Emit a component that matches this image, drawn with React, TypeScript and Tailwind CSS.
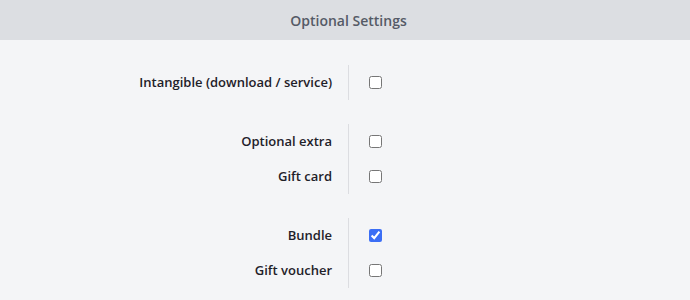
import React, { useState } from 'react';

type Row = { key: string; label: string };

const groups: Row[][] = [
  [{ key: 'intangible', label: 'Intangible (download / service)' }],
  [
    { key: 'optionalExtra', label: 'Optional extra' },
    { key: 'giftCard', label: 'Gift card' },
  ],
  [
    { key: 'bundle', label: 'Bundle' },
    { key: 'giftVoucher', label: 'Gift voucher' },
  ],
];

const App: React.FC = () => {
  const [checked, setChecked] = useState<Record<string, boolean>>({
    bundle: true,
  });

  const toggle = (key: string) =>
    setChecked((prev) => ({ ...prev, [key]: !prev[key] }));

  return (
    <div className="w-[690px] h-[300px] bg-[#f4f5f7] font-['Open_Sans',sans-serif] overflow-hidden">
      <div className="h-10 bg-[#dcdee2] flex items-center justify-center pl-[7px] pt-px text-[14px] font-semibold text-[#555a66]">
        Optional Settings
      </div>
      <div className="flex flex-col gap-6 pt-[25px]">
        {groups.map((rows, i) => (
          <div key={i} className="flex">
            <div className="w-[349px] border-r border-[#dcdde1] pr-4">
              {rows.map((row) => (
                <div
                  key={row.key}
                  className="h-[35px] flex items-center justify-end text-[13px] font-semibold text-[#1f2129]"
                >
                  {row.label}
                </div>
              ))}
            </div>
            <div className="pl-5">
              {rows.map((row) => (
                <div key={row.key} className="h-[35px] flex items-center">
                  <input
                    type="checkbox"
                    checked={!!checked[row.key]}
                    onChange={() => toggle(row.key)}
                    className="m-0 w-[13px] h-[13px] accent-[#3b6ef5]"
                  />
                </div>
              ))}
            </div>
          </div>
        ))}
      </div>
    </div>
  );
};

export default App;
